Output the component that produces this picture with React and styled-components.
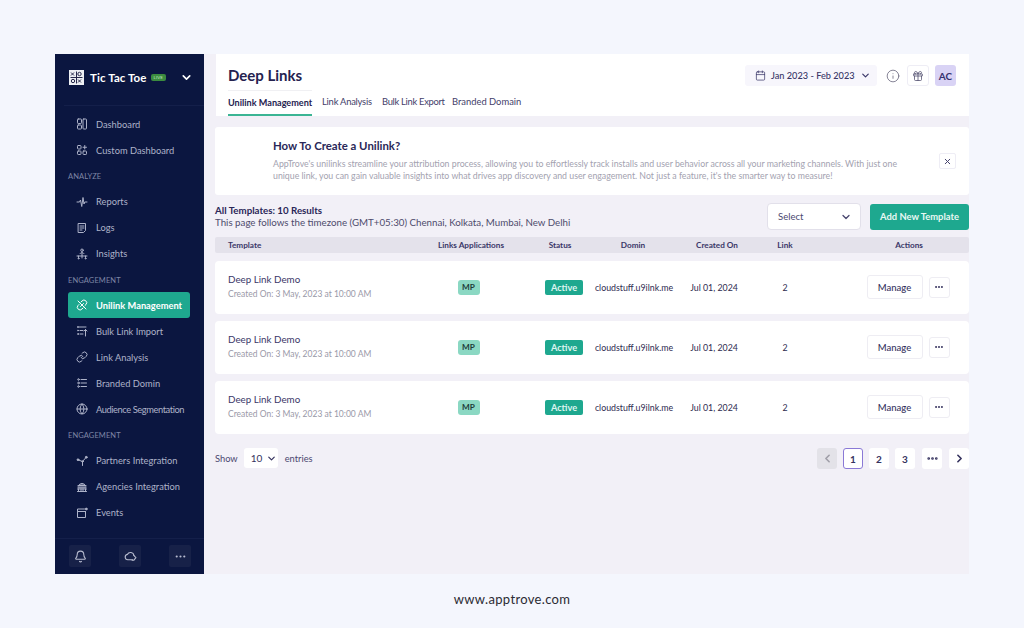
import React from 'react';
import styled, { createGlobalStyle } from 'styled-components';
import {
  Link as LinkIcon, Globe, Bell, MoreHorizontal, ChevronDown,
  ChevronLeft, ChevronRight, Calendar, Info, Gift, X,
} from 'lucide-react';

const Global = createGlobalStyle`
  html, body { margin: 0; padding: 0; background: #f4f6fd; }
  body { font-family: Lato, "Noto Sans", sans-serif; color: #2a2758; }
  * { box-sizing: border-box; }
`;

const Page = styled.div`
  width: 1024px; height: 628px; padding: 54px 55px 0; display: flex; flex-direction: column; overflow: hidden;
`;
const Frame = styled.div`display: flex; height: 520px;`;
const Side = styled.aside`
  width: 149px; flex: none; background: #0b1640; display: flex; flex-direction: column; color: #aeb3c9;
`;
const Brand = styled.div`
  height: 52px; margin-left: 9px; padding: 0 11px 4px 5px; display: flex; align-items: center;
  border-bottom: 1px solid #141f4a; color: #fff;
`;
const Logo = styled.svg`width: 15px; height: 15px; flex: none; margin-right: 6px;`;
const BrandName = styled.span`font-size: 11.5px; font-weight: 700; letter-spacing: .1px; white-space: nowrap;`;
const Live = styled.span`
  margin-left: 4px; background: #3b8b3f; color: #bfe5bf; font-size: 4.5px; line-height: 7.5px; padding: 0 3px; border-radius: 2px;
`;
const BrandChevron = styled(ChevronDown)`margin-left: auto; width: 13px; height: 13px; stroke-width: 3;`;
const Nav = styled.nav`flex: 1; padding: 5px 14px 0 13px; display: flex; flex-direction: column;`;
const Group = styled.div`
  height: 25.5px; line-height: 27px; font-size: 7.5px; color: #7f86a6; letter-spacing: .1px;
`;
const Item = styled.div`
  height: 26px; flex: none; padding-left: 8px; display: flex; align-items: center; gap: 8px; border-radius: 3px;
  font-size: 9.3px; white-space: nowrap;
  letter-spacing: ${p => (p.$tight ? '-.42px' : '0')};
  background: ${p => (p.$active ? '#1ea88f' : 'transparent')};
  color: ${p => (p.$active ? '#fff' : '#aeb3c9')};
  font-weight: ${p => (p.$active ? 700 : 400)};
  svg { width: 12px; height: 12px; flex: none; }
`;
const SideFoot = styled.div`
  height: 36px; border-top: 1px solid #141f4a; padding: 6px 13px 0 14px; display: flex; justify-content: space-between;
`;
const FootBtn = styled.button`
  width: 22px; height: 22px; border: 0; padding: 0; border-radius: 2px; background: #172148; color: #b9bdd0;
  display: flex; align-items: center; justify-content: center;
  svg { width: 13px; height: 13px; }
`;
const Main = styled.main`flex: 1; min-width: 0; display: flex; flex-direction: column; background: #f2f0f7; padding-left: 11px;`;
const Header = styled.header`
  height: 62px; margin-left: 1px; background: #fff; padding: 0 13px 0 12px; display: flex; flex-direction: column;
`;
const HeaderTop = styled.div`height: 33px; display: flex; align-items: flex-end; justify-content: space-between;`;
const Title = styled.h1`margin: 0 0 3px; font-size: 15px; line-height: 18px; font-weight: 700; color: #25224f;`;
const HeadTools = styled.div`display: flex; align-items: center; align-self: flex-end; height: 21px; margin-bottom: 1px;`;
const DatePill = styled.div`
  width: 132px; height: 21px; padding-left: 10px; background: #f7f6fc; border-radius: 3px; display: flex; align-items: center; gap: 5px;
  font-size: 9.2px; font-weight: 500; color: #3a3768; margin-right: 9px; white-space: nowrap;
  svg { width: 11px; height: 11px; flex: none; stroke-width: 1.6; }
  svg:last-child { stroke-width: 2.6; width: 11px; height: 11px; }
`;
const InfoBtn = styled.span`display: flex; margin-right: 7px; color: #6c6a80; svg { width: 14px; height: 14px; stroke-width: 1.4; }`;
const GiftBtn = styled.span`
  width: 22px; height: 21px; border: 1px solid #eeedf5; border-radius: 3px; display: flex; align-items: center; justify-content: center;
  margin-right: 6px; color: #4a4768; svg { width: 12px; height: 12px; stroke-width: 1.5; }
`;
const Avatar = styled.span`
  width: 21px; height: 21px; background: #d9d3f5; border-radius: 3px; font-size: 10px; font-weight: 700; color: #35316e;
  display: flex; align-items: center; justify-content: center;
`;
const Tabs = styled.div`display: flex; margin-top: 3px; height: 26px;`;
const Tab = styled.div`
  font-size: ${p => (p.$active ? 9.1 : 9.4)}px; line-height: 24px; white-space: nowrap; color: ${p => (p.$active ? '#25224f' : '#44416a')};
  font-weight: ${p => (p.$active ? 700 : 400)}; margin-right: ${p => p.$gap}px; width: ${p => p.$w}px;
  letter-spacing: ${p => p.$ls || 0}px;
  border-bottom: ${p => (p.$active ? '2px solid #3bb594' : '0')};
  border-top: ${p => (p.$active ? '1px solid #f0f0f3' : '0')};
`;
const Banner = styled.section`
  height: 68px; margin-top: 11px; background: #fff; border-radius: 3px; padding: 12px 13px 0 58px; position: relative;
`;
const BannerTitle = styled.h2`margin: 0; font-size: 11.4px; line-height: 14px; font-weight: 700; color: #2a2758;`;
const BannerText = styled.p`margin: 5px 0 0; width: 630px; font-size: 8.75px; line-height: 11.7px; color: #a3a2b0;`;
const Close = styled.button`
  position: absolute; right: 13px; top: 26px; width: 17px; height: 16px; border: 1px solid #eeedf5; border-radius: 2px; background: #fff;
  padding: 0; display: flex; align-items: center; justify-content: center; color: #43406b;
  svg { width: 9px; height: 9px; stroke-width: 2.6; }
`;
const Toolbar = styled.div`height: 42px; display: flex; align-items: center; justify-content: space-between; padding-top: 1px;`;
const Summary = styled.div`font-size: 9.72px; line-height: 11.5px; color: #4d4b6c; white-space: nowrap;`;
const SummaryHead = styled.div`font-weight: 700; color: #2a2758;`;
const ToolRight = styled.div`display: flex; gap: 9px; align-items: center;`;
const SelectBox = styled.div`
  width: 94px; height: 27px; background: #fff; border: 1px solid #e2e0ea; border-radius: 4px; padding: 0 8px 0 10px;
  display: flex; align-items: center; justify-content: space-between; font-size: 9.5px; color: #4a4770;
  svg { width: 12px; height: 12px; stroke-width: 2.6; }
`;
const AddBtn = styled.button`
  width: 99px; height: 26px; border: 0; border-radius: 3px; background: #1ea88f; color: #e9f8f4; padding: 0;
  font: 700 9.4px Lato, sans-serif; white-space: nowrap;
`;
const cols = '217px 73px 88px 80px 88px 48px 1fr';
const TableHead = styled.div`
  display: grid; grid-template-columns: ${cols}; height: 16px; align-items: center; background: #e4e2eb; border-radius: 2px;
  font-size: 8.2px; font-weight: 700; color: #3a3768; white-space: nowrap;
`;
const Row = styled.div`
  display: grid; grid-template-columns: ${cols}; height: 53px; padding-bottom: 1px; align-items: center; background: #fff; border-radius: 4px; margin-top: ${p => p.$mt}px;
  font-size: 8.8px; color: #2e2b50; white-space: nowrap;
`;
const NameCell = styled.div`padding-left: 13px; padding-bottom: ${p => p.$pb || 0}px;`;
const CenterCell = styled.div`
  display: flex; justify-content: center; padding-left: ${p => p.$pl || 0}px; padding-right: ${p => p.$pr || 0}px;
`;
const RowName = styled.div`font-size: 9.8px; line-height: 12px; color: #3a3768;`;
const RowSub = styled.div`margin-top: 4px; font-size: 8.5px; line-height: 11px; color: #9a99a8;`;
const Mp = styled.span`
  width: 22px; height: 15px; background: #8bd8c3; border-radius: 3px; font-size: 8.2px; font-weight: 700; color: #1d3d3a;
  display: flex; align-items: center; justify-content: center;
`;
const Status = styled.span`
  width: 38px; height: 15px; background: #1ea88f; border-radius: 2px; font-size: 9.2px; font-weight: 700; color: #def5ef;
  display: flex; align-items: center; justify-content: center;
`;
const Actions = styled.div`display: flex; justify-content: center; align-items: center; gap: 6px; padding-left: 38px;`;
const Manage = styled.button`
  width: 56px; height: 24px; background: #fff; border: 1px solid #eeedf3; border-radius: 3px; padding: 0;
  font: 500 9.5px Lato, sans-serif; color: #35325e;
`;
const Dots = styled.button`
  width: 21px; height: 21px; background: #fff; border: 1px solid #eeedf3; border-radius: 3px; padding: 0; color: #35325e;
  display: flex; align-items: center; justify-content: center; svg { width: 10px; height: 10px; stroke-width: 3; }
`;
const Foot = styled.div`margin-top: 14px; display: flex; align-items: flex-start; justify-content: space-between;`;
const Show = styled.div`display: flex; align-items: center; height: 20px; font-size: 9.3px; color: #4a4770;`;
const ShowSel = styled.div`
  width: 34px; height: 20px; margin: 0 7px 0 6px; padding-left: 7px; background: #fff; border-radius: 3px; display: flex; align-items: center; gap: 4px;
  font-size: 10px; color: #35325e; svg { width: 11px; height: 11px; stroke-width: 2.6; }
`;
const Pager = styled.div`display: flex; gap: 6px;`;
const Page_ = styled.div`
  width: 20px; height: 21px; border-radius: 3px; display: flex; align-items: center; justify-content: center;
  font-size: 10px; font-weight: 700; color: ${p => (p.$muted ? '#a09fa8' : '#35325e')};
  background: ${p => (p.$muted ? '#e3e2e8' : '#fff')};
  border: ${p => (p.$current ? '1.5px solid #8a79d6' : '0')};
  margin-left: ${p => p.$ml || 0}px;
  svg { width: 13px; height: 13px; stroke-width: 3; }
`;
const Site = styled.div`
  margin-top: 17px; text-align: center; font-size: 13px; line-height: 16px; letter-spacing: .33px; color: #2b2b33;
`;

const Glyph = ({ children }) => (
  <svg viewBox="0 0 24 24" fill="none" stroke="currentColor" strokeWidth="2" strokeLinecap="round" strokeLinejoin="round">
    {children}
  </svg>
);

const IconDash = () => (
  <Glyph><rect x="3" y="2" width="8" height="9" rx="1.5" /><rect x="3" y="14" width="8" height="8" rx="1.5" /><rect x="14" y="2" width="7" height="20" rx="1.5" /></Glyph>
);
const IconCustom = () => (
  <Glyph><rect x="3" y="3" width="7" height="7" rx="1.5" /><rect x="3" y="14" width="7" height="7" rx="1.5" /><rect x="14" y="14" width="7" height="7" rx="1.5" /><path d="M17.5 3v7M14 6.5h7" /></Glyph>
);
const IconReports = () => (
  <Glyph><path d="M2 12h5l2-4 2.5 13L14 3l2 13 1.5-4H22" /></Glyph>
);
const IconLogs = () => (
  <Glyph><path d="M5 3h14v14l-4 4H5z" /><path d="M8 8h8M8 12h8M8 16h4" /></Glyph>
);
const IconInsights = () => (
  <Glyph><circle cx="12" cy="4.5" r="2.5" /><path d="M8 11c1-2.5 7-2.5 8 0M12 10v5M2 16h20M5 16v3M12 16v4M19 16v3" /><circle cx="5" cy="21" r="1" /><circle cx="19" cy="21" r="1" /></Glyph>
);
const IconUnlink = () => (
  <Glyph>
    <path d="M10 6l2-2a5 5 0 0 1 8 7l-2 2M14 18l-2 2a5 5 0 0 1-8-7l2-2" />
    <path d="M9 15l6-6M4 4l16 16" />
  </Glyph>
);
const IconBulk = () => (
  <Glyph>
    <path d="M3 4h17M3 4h2M8 11h6M8 18h6" />
    <circle cx="4" cy="11" r="1" /><circle cx="4" cy="18" r="1" />
    <path d="M19 22V9M16 12l3-3 3 3" />
  </Glyph>
);
const IconBranded = () => (
  <Glyph>
    <path d="M10 5h11M10 12h11M10 19h11" />
    <circle cx="5" cy="5" r="1.6" /><circle cx="5" cy="12" r="1.6" /><circle cx="5" cy="19" r="1.6" />
  </Glyph>
);
const IconPartners = () => (
  <Glyph>
    <path d="M13 13l7-8M13 13l-8-3M13 13v8" />
    <circle cx="4" cy="9.5" r="1.8" fill="currentColor" /><circle cx="20.5" cy="4.5" r="1.8" fill="currentColor" /><circle cx="13" cy="13" r="1.5" />
  </Glyph>
);
const IconAgencies = () => (
  <Glyph>
    <path d="M4 13a8 8 0 0 1 16 0zM12 5v8M8 6.5v6.5M16 6.5v6.5M4 9h16" />
    <path d="M3 16h18M5 16v5M10 16v5M14 16v5M19 16v5M3 21h18" />
  </Glyph>
);
const IconEvents = () => (
  <Glyph>
    <path d="M17 4H3v17h16V9" /><path d="M3 9h16" /><circle cx="20.5" cy="4" r="1.8" fill="currentColor" />
  </Glyph>
);
const IconCloud = () => (
  <Glyph>
    <path d="M16 18H7a5 5 0 0 1-.8-9.9A6.5 6.5 0 0 1 18.4 10" />
    <path d="M18 10l4 4-4 5H15" />
  </Glyph>
);

const BrandLogo = () => (
  <Logo viewBox="0 0 15 15">
    <rect width="15" height="15" fill="#eef0f4" />
    <g stroke="#26284a" strokeWidth="1" fill="none">
      <path d="M2 2.5l3 3M5 2.5l-3 3M7.5 1.5v12M1.5 7.5h12M9 9.5l3 3M12 9.5l-3 3" />
      <circle cx="10.5" cy="4" r="1.7" />
      <circle cx="4" cy="11" r="1.7" />
    </g>
  </Logo>
);

const rows = [8, 7, 7];

export default function App() {
  return (
    <Page>
      <Global />
      <Frame>
        <Side>
          <Brand>
            <BrandLogo />
            <BrandName>Tic Tac Toe</BrandName>
            <Live>LIVE</Live>
            <BrandChevron />
          </Brand>
          <Nav>
            <Item><IconDash />Dashboard</Item>
            <Item><IconCustom />Custom Dashboard</Item>
            <Group>ANALYZE</Group>
            <Item><IconReports />Reports</Item>
            <Item><IconLogs />Logs</Item>
            <Item><IconInsights />Insights</Item>
            <Group>ENGAGEMENT</Group>
            <Item $active><IconUnlink />Unilink Management</Item>
            <Item><IconBulk />Bulk Link Import</Item>
            <Item><LinkIcon />Link Analysis</Item>
            <Item><IconBranded />Branded Domin</Item>
            <Item $tight><Globe />Audience Segmentation</Item>
            <Group>ENGAGEMENT</Group>
            <Item><IconPartners />Partners Integration</Item>
            <Item><IconAgencies />Agencies Integration</Item>
            <Item><IconEvents />Events</Item>
          </Nav>
          <SideFoot>
            <FootBtn><Bell /></FootBtn>
            <FootBtn><IconCloud /></FootBtn>
            <FootBtn><MoreHorizontal /></FootBtn>
          </SideFoot>
        </Side>
        <Main>
          <Header>
            <HeaderTop>
              <Title>Deep Links</Title>
              <HeadTools>
                <DatePill><Calendar />Jan 2023 - Feb 2023<ChevronDown /></DatePill>
                <InfoBtn><Info /></InfoBtn>
                <GiftBtn><Gift /></GiftBtn>
                <Avatar>AC</Avatar>
              </HeadTools>
            </HeaderTop>
            <Tabs>
              <Tab $active $w={84} $gap={10}>Unilink Management</Tab>
              <Tab $w={50} $gap={10} $ls={-0.22}>Link Analysis</Tab>
              <Tab $w={60} $gap={10} $ls={-0.3}>Bulk Link Export</Tab>
              <Tab $w={70} $gap={0}>Branded Domain</Tab>
            </Tabs>
          </Header>
          <Banner>
            <BannerTitle>How To Create a Unilink?</BannerTitle>
            <BannerText>
              AppTrove's unilinks streamline your attribution process, allowing you to effortlessly track installs and user behavior across all your marketing channels. With just one unique link, you can gain valuable insights into what drives app discovery and user engagement. Not just a feature, it's the smarter way to measure!
            </BannerText>
            <Close><X /></Close>
          </Banner>
          <Toolbar>
            <Summary>
              <SummaryHead>All Templates: 10 Results</SummaryHead>
              This page follows the timezone (GMT+05:30) Chennai, Kolkata, Mumbai, New Delhi
            </Summary>
            <ToolRight>
              <SelectBox>Select<ChevronDown /></SelectBox>
              <AddBtn>Add New Template</AddBtn>
            </ToolRight>
          </Toolbar>
          <TableHead>
            <NameCell>Template</NameCell>
            <CenterCell $pl={5}>Links Applications</CenterCell>
            <CenterCell $pl={22}>Status</CenterCell>
            <CenterCell>Domin</CenterCell>
            <CenterCell>Created On</CenterCell>
            <CenterCell>Link</CenterCell>
            <CenterCell $pl={40}>Actions</CenterCell>
          </TableHead>
          {rows.map((mt, i) => (
            <Row key={i} $mt={mt}>
              <NameCell $pb={2}>
                <RowName>Deep Link Demo</RowName>
                <RowSub>Created On: 3 May, 2023 at 10:00 AM</RowSub>
              </NameCell>
              <CenterCell><Mp>MP</Mp></CenterCell>
              <CenterCell $pl={30}><Status>Active</Status></CenterCell>
              <CenterCell $pl={2}>cloudstuff.u9ilnk.me</CenterCell>
              <CenterCell $pr={6}>Jul 01, 2024</CenterCell>
              <CenterCell>2</CenterCell>
              <Actions><Manage>Manage</Manage><Dots><MoreHorizontal /></Dots></Actions>
            </Row>
          ))}
          <Foot>
            <Show>Show<ShowSel>10<ChevronDown /></ShowSel>entries</Show>
            <Pager>
              <Page_ $muted><ChevronLeft /></Page_>
              <Page_ $current>1</Page_>
              <Page_>2</Page_>
              <Page_>3</Page_>
              <Page_ $ml={1}><MoreHorizontal /></Page_>
              <Page_ $ml={1}><ChevronRight /></Page_>
            </Pager>
          </Foot>
        </Main>
      </Frame>
      <Site>www.apptrove.com</Site>
    </Page>
  );
}
